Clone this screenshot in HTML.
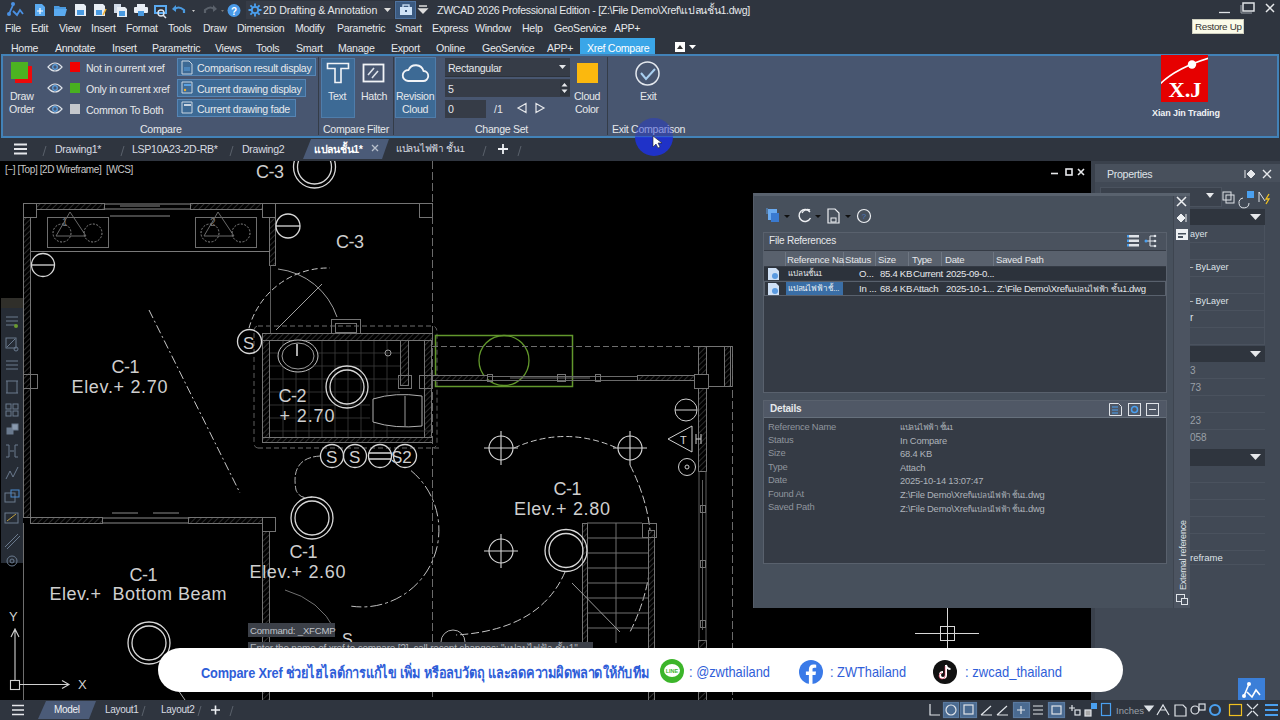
<!DOCTYPE html>
<html><head><meta charset="utf-8">
<style>
*{box-sizing:border-box;margin:0;padding:0}
html,body{width:1280px;height:720px;overflow:hidden}
body{position:relative;background:#2f353f;font-family:"Liberation Sans",sans-serif;color:#e6e8eb}
.a{position:absolute}
.t{position:absolute;line-height:1;white-space:nowrap}
.th{font-size:0.85em;letter-spacing:-0.3px}
svg{position:absolute;overflow:visible}
</style></head><body>

<!-- ===== TOP BAR ===== -->
<div class="a" style="left:0;top:0;width:1280px;height:137px;background:#2f353f"></div>

<!-- quick access icons -->
<svg style="left:0;top:0" width="240" height="20" viewBox="0 0 240 20">
  <path d="M9 14 L13 5 M13 11 L17 15 L20 10 L23 14" stroke="#4a90e2" stroke-width="1.8" fill="none"/>
  <circle cx="13" cy="4" r="2" fill="#4a90e2"/><circle cx="9" cy="14" r="2" fill="#4a90e2"/>
  <path d="M35 4 h7 l3 3 v9 h-10z" fill="#5aaaf0"/><path d="M40 8 v6 M37 11 h6" stroke="#fff" stroke-width="1.2"/>
  <path d="M54 6 h5 l1 1 h6 v2 h-12z" fill="#4a9ae0"/><path d="M54 9 h13 l-2 7 h-11z" fill="#5aaaf0"/>
  <path d="M75 4 h9 l2 2 v10 h-11z" fill="#e8eef5"/><rect x="77" y="10" width="7" height="5" fill="#4a9ae0"/>
  <path d="M94 4 h9 l2 2 v10 h-11z" fill="#e8eef5"/><rect x="96" y="10" width="6" height="5" fill="#4a9ae0"/><path d="M103 15 l3 -6" stroke="#f0b030" stroke-width="1.6"/>
  <rect x="114" y="4" width="7" height="9" fill="#d0dae8"/><path d="M117 7 h8 l2 2 v8 h-10z" fill="#e8eef5"/><rect x="119" y="11" width="6" height="5" fill="#4a9ae0"/>
  <rect x="137" y="4" width="8" height="4" fill="#e8eef5"/><rect x="134" y="7" width="14" height="6" rx="1" fill="#e8eef5"/><rect x="138" y="11" width="6" height="5" fill="#4a9ae0"/>
  <rect x="154" y="5" width="13" height="9" fill="#5aaaf0"/><rect x="156" y="7" width="9" height="5" fill="#2f353f"/><circle cx="161" cy="13" r="3" fill="none" stroke="#e0e6ee" stroke-width="1.3"/><path d="M163 15 l3 3" stroke="#e0e6ee" stroke-width="1.5"/>
  <path d="M174 10 q4 -5 10 0 v3" stroke="#4a9ae0" stroke-width="2.2" fill="none"/><path d="M172 9 l4 -4 v7z" fill="#4a9ae0"/>
  <path d="M192 10 l3 0 l-1.5 2z" fill="#ccc"/>
  <path d="M215 10 q-4 -5 -10 0 v3" stroke="#5a616b" stroke-width="2.2" fill="none"/><path d="M217 9 l-4 -4 v7z" fill="#5a616b"/>
  <path d="M221 10 l3 0 l-1.5 2z" fill="#777"/>
  <circle cx="234" cy="10.5" r="6.5" fill="#4a9ae8"/><text x="234" y="14.5" font-size="10" font-weight="bold" text-anchor="middle" fill="#fff" font-family="Liberation Sans">?</text>
</svg>

<!-- workspace dropdown -->
<div class="a" style="left:246px;top:1px;width:148px;height:18px;background:#363c47"></div>
<svg style="left:248px;top:3px" width="14" height="14" viewBox="0 0 14 14">
  <circle cx="7" cy="7" r="3.2" fill="none" stroke="#4aa0f0" stroke-width="1.8"/>
  <path d="M7 0.5v2.5M7 11v2.5M0.5 7h2.5M11 7h2.5M2.4 2.4l1.8 1.8M9.8 9.8l1.8 1.8M2.4 11.6l1.8-1.8M9.8 4.2l1.8-1.8" stroke="#4aa0f0" stroke-width="1.8"/>
</svg>
<div class="t" style="left:263px;top:5px;font-size:10.6px;letter-spacing:-0.1px;color:#e6e8eb">2D Drafting &amp; Annotation</div>
<svg style="left:384px;top:8px" width="8" height="5"><path d="M0 0h7l-3.5 4z" fill="#ddd"/></svg>
<div class="a" style="left:395px;top:1px;width:21px;height:18px;background:#3b5a80;border:1px solid #4f73a0"></div>
<svg style="left:399px;top:4px" width="14" height="12"><rect x="1" y="3" width="12" height="8" fill="#cfe3f7"/><rect x="4" y="1" width="6" height="3" fill="none" stroke="#cfe3f7" stroke-width="1.3"/><rect x="6" y="6" width="2" height="2" fill="#3b5a80"/></svg>
<svg style="left:418px;top:5px" width="10" height="10"><path d="M1 1h8M1 4h8l-4 4z" stroke="#ddd" stroke-width="1.3" fill="#ddd"/></svg>
<div class="t" style="left:437px;top:5px;font-size:10.6px;letter-spacing:-0.3px;color:#e6e8eb">ZWCAD 2026 Professional Edition - [Z:\File Demo\Xref\แปลนชั้น1.dwg]</div>

<!-- window controls -->
<svg style="left:1215px;top:0" width="65" height="18">
  <path d="M4 12.5h11" stroke="#dfe2e6" stroke-width="1.3"/>
  <rect x="28" y="3" width="11" height="8" fill="none" stroke="#dfe2e6" stroke-width="1.5"/><path d="M26 5v8h11" fill="none" stroke="#9aa0a8" stroke-width="1"/>
  <path d="M51 4l8 8M59 4l-8 8" stroke="#e6e8eb" stroke-width="1.5"/>
</svg>
<div class="a" style="left:1192px;top:19px;width:52px;height:15px;background:#fbfbe9;border:1px solid #cfcfbf"></div>
<div class="t" style="left:1195px;top:22px;font-size:9.8px;letter-spacing:-0.3px;color:#333">Restore Up</div>

<!-- menu -->
<div class="t" style="left:5px;top:23.4px;font-size:10.6px;letter-spacing:-0.3px">File</div>
<div class="t" style="left:31px;top:23.4px;font-size:10.6px;letter-spacing:-0.3px">Edit</div>
<div class="t" style="left:59px;top:23.4px;font-size:10.6px;letter-spacing:-0.3px">View</div>
<div class="t" style="left:91px;top:23.4px;font-size:10.6px;letter-spacing:-0.3px">Insert</div>
<div class="t" style="left:126px;top:23.4px;font-size:10.6px;letter-spacing:-0.3px">Format</div>
<div class="t" style="left:168px;top:23.4px;font-size:10.6px;letter-spacing:-0.3px">Tools</div>
<div class="t" style="left:203px;top:23.4px;font-size:10.6px;letter-spacing:-0.3px">Draw</div>
<div class="t" style="left:237px;top:23.4px;font-size:10.6px;letter-spacing:-0.3px">Dimension</div>
<div class="t" style="left:295px;top:23.4px;font-size:10.6px;letter-spacing:-0.3px">Modify</div>
<div class="t" style="left:337px;top:23.4px;font-size:10.6px;letter-spacing:-0.3px">Parametric</div>
<div class="t" style="left:395px;top:23.4px;font-size:10.6px;letter-spacing:-0.3px">Smart</div>
<div class="t" style="left:432px;top:23.4px;font-size:10.6px;letter-spacing:-0.3px">Express</div>
<div class="t" style="left:475px;top:23.4px;font-size:10.6px;letter-spacing:-0.3px">Window</div>
<div class="t" style="left:522px;top:23.4px;font-size:10.6px;letter-spacing:-0.3px">Help</div>
<div class="t" style="left:554px;top:23.4px;font-size:10.6px;letter-spacing:-0.3px">GeoService</div>
<div class="t" style="left:614px;top:23.4px;font-size:10.6px;letter-spacing:-0.3px">APP+</div>

<!-- ribbon tabs -->
<div class="a" style="left:580px;top:38px;width:75px;height:17px;background:#3aa6e8"></div>
<div class="t" style="left:11px;top:42.5px;font-size:10.6px;letter-spacing:-0.3px">Home</div>
<div class="t" style="left:55px;top:42.5px;font-size:10.6px;letter-spacing:-0.3px">Annotate</div>
<div class="t" style="left:112px;top:42.5px;font-size:10.6px;letter-spacing:-0.3px">Insert</div>
<div class="t" style="left:152px;top:42.5px;font-size:10.6px;letter-spacing:-0.3px">Parametric</div>
<div class="t" style="left:215px;top:42.5px;font-size:10.6px;letter-spacing:-0.3px">Views</div>
<div class="t" style="left:256px;top:42.5px;font-size:10.6px;letter-spacing:-0.3px">Tools</div>
<div class="t" style="left:296px;top:42.5px;font-size:10.6px;letter-spacing:-0.3px">Smart</div>
<div class="t" style="left:338px;top:42.5px;font-size:10.6px;letter-spacing:-0.3px">Manage</div>
<div class="t" style="left:391px;top:42.5px;font-size:10.6px;letter-spacing:-0.3px">Export</div>
<div class="t" style="left:436px;top:42.5px;font-size:10.6px;letter-spacing:-0.3px">Online</div>
<div class="t" style="left:482px;top:42.5px;font-size:10.6px;letter-spacing:-0.3px">GeoService</div>
<div class="t" style="left:547px;top:42.5px;font-size:10.6px;letter-spacing:-0.3px">APP+</div>
<div class="t" style="left:587px;top:42.5px;font-size:10.6px;letter-spacing:-0.3px;color:#fff">Xref Compare</div>
<svg style="left:674px;top:41px" width="24" height="12"><rect x="1" y="1" width="10" height="10" fill="#fff"/><path d="M3 8l3-4 3 4z" fill="#333"/><path d="M15 4h7l-3.5 4z" fill="#fff"/></svg>

<!-- RIBBON_PANEL -->
<div class="a" style="left:1px;top:54px;width:1278px;height:84px;background:#485670;border:2px solid #4282b8"></div>
<!-- separators -->
<div class="a" style="left:318px;top:57px;width:1px;height:78px;background:#343c48"></div>
<div class="a" style="left:393px;top:57px;width:1px;height:78px;background:#343c48"></div>
<div class="a" style="left:607px;top:57px;width:1px;height:78px;background:#343c48"></div>
<!-- draw order -->
<div class="a" style="left:15px;top:66px;width:17px;height:17px;background:#ee0a0a"></div>
<div class="a" style="left:11px;top:62px;width:17px;height:17px;background:#4cb321"></div>
<div class="t" style="left:10px;top:91px;font-size:10.6px;letter-spacing:-0.3px">Draw</div>
<div class="t" style="left:9px;top:104px;font-size:10.6px;letter-spacing:-0.3px">Order</div>
<!-- eye rows -->
<svg style="left:47px;top:60px" width="16" height="56" viewBox="0 0 16 56">
  <g fill="none" stroke="#dfe4ea" stroke-width="1.2">
    <path d="M1 7 Q8 -1 15 7 Q8 15 1 7z"/><path d="M1 28 Q8 20 15 28 Q8 36 1 28z"/><path d="M1 49 Q8 41 15 49 Q8 57 1 49z"/>
  </g>
  <g fill="none" stroke="#5aa0e0" stroke-width="1.3"><circle cx="8" cy="7" r="2.3"/><circle cx="8" cy="28" r="2.3"/><circle cx="8" cy="49" r="2.3"/></g>
</svg>
<div class="a" style="left:70px;top:62px;width:10px;height:10px;background:#f00000"></div>
<div class="a" style="left:70px;top:83px;width:10px;height:10px;background:#48b020"></div>
<div class="a" style="left:70px;top:104px;width:10px;height:10px;background:#c4c7cc"></div>
<div class="t" style="left:86px;top:63px;font-size:10.6px;letter-spacing:-0.3px">Not in current xref</div>
<div class="t" style="left:86px;top:84px;font-size:10.6px;letter-spacing:-0.3px">Only in current xref</div>
<div class="t" style="left:86px;top:105px;font-size:10.6px;letter-spacing:-0.3px">Common To Both</div>
<!-- compare buttons -->
<div class="a" style="left:177px;top:58px;width:139px;height:18px;background:#3d6a95;border:1px solid #5585b5"></div>
<div class="a" style="left:177px;top:79px;width:129px;height:18px;background:#3d6a95;border:1px solid #5585b5"></div>
<div class="a" style="left:177px;top:99px;width:119px;height:18px;background:#3d6a95;border:1px solid #5585b5"></div>
<svg style="left:180px;top:60px" width="14" height="56" viewBox="0 0 14 56">
  <g fill="none" stroke="#c8d4e0" stroke-width="1"><path d="M2 1h7l3 3v10h-10z"/><path d="M2 22h10v11h-10z"/><path d="M2 42h10v11h-10z"/></g>
  <path d="M4 8h6M4 10h6" stroke="#5aa0e0" stroke-width="1"/>
  <rect x="4" y="24" width="7" height="2" fill="#5aa0e0"/><circle cx="5" cy="30" r="1.2" fill="#f0b030"/>
  <rect x="4" y="44" width="7" height="2" fill="#c8d4e0"/>
</svg>
<div class="t" style="left:197px;top:63px;font-size:10.6px;letter-spacing:-0.3px">Comparison result display</div>
<div class="t" style="left:197px;top:84px;font-size:10.6px;letter-spacing:-0.3px">Current drawing display</div>
<div class="t" style="left:197px;top:104px;font-size:10.6px;letter-spacing:-0.3px">Current drawing fade</div>
<div class="t" style="left:140px;top:124px;font-size:10.6px;letter-spacing:-0.3px">Compare</div>
<!-- compare filter -->
<div class="a" style="left:321px;top:58px;width:34px;height:60px;background:#3d6a95;border:1px solid #4f7dab"></div>
<svg style="left:326px;top:62px" width="24" height="22" viewBox="0 0 24 22">
  <path d="M1.5 1.5h21v5h-7.5v14h-6v-14h-7.5z" fill="none" stroke="#f2f4f7" stroke-width="1.6"/>
</svg>
<svg style="left:362px;top:63px" width="24" height="21" viewBox="0 0 24 21">
  <rect x="1.5" y="1.5" width="20" height="17" fill="none" stroke="#f2f4f7" stroke-width="1.8"/>
  <path d="M6 12l6-7M10 15l6-7" stroke="#dde3ea" stroke-width="1.6"/>
</svg>
<div class="t" style="left:328px;top:91px;font-size:10.6px;letter-spacing:-0.3px">Text</div>
<div class="t" style="left:361px;top:91px;font-size:10.6px;letter-spacing:-0.3px">Hatch</div>
<div class="t" style="left:323px;top:124px;font-size:10.6px;letter-spacing:-0.3px">Compare Filter</div>
<!-- revision cloud -->
<div class="a" style="left:395px;top:57px;width:41px;height:61px;background:#3d6a95;border:1px solid #4f7dab"></div>
<svg style="left:402px;top:62px" width="27" height="22" viewBox="0 0 27 22">
  <path d="M6 19 h15 a5 5 0 0 0 0.5 -10 a8 8 0 0 0 -15 -1 a5.5 5.5 0 0 0 -0.5 11z" fill="none" stroke="#f2f4f7" stroke-width="1.8"/>
</svg>
<div class="t" style="left:396px;top:91px;font-size:10.6px;letter-spacing:-0.3px">Revision</div>
<div class="t" style="left:402px;top:104px;font-size:10.6px;letter-spacing:-0.3px">Cloud</div>
<!-- change set -->
<div class="a" style="left:445px;top:58px;width:125px;height:19px;background:#363c47;border-bottom:1px solid #2c323b"></div>
<div class="t" style="left:448px;top:63px;font-size:10.6px;letter-spacing:-0.3px">Rectangular</div>
<svg style="left:559px;top:65px" width="8" height="5"><path d="M0 0h7l-3.5 4z" fill="#e6e8eb"/></svg>
<div class="a" style="left:445px;top:79px;width:125px;height:18px;background:#363c47"></div>
<div class="a" style="left:560px;top:80px;width:10px;height:16px;background:#2e343d"></div>
<svg style="left:561px;top:82px" width="8" height="12"><path d="M0.5 4.5h6l-3-3.5z M0.5 7.5h6l-3 3.5z" fill="#e6e8eb"/></svg>
<div class="t" style="left:448px;top:84px;font-size:10.6px">5</div>
<div class="a" style="left:445px;top:100px;width:41px;height:18px;background:#363c47"></div>
<div class="t" style="left:448px;top:104px;font-size:10.6px">0</div>
<div class="t" style="left:494px;top:104px;font-size:10.6px">/1</div>
<svg style="left:516px;top:102px" width="30" height="12"><path d="M10 1.5v9l-8-4.5z M20 1.5v9l8-4.5z" fill="none" stroke="#e6e8eb" stroke-width="1.2"/></svg>
<div class="t" style="left:475px;top:124px;font-size:10.6px;letter-spacing:-0.3px">Change Set</div>
<div class="a" style="left:577px;top:63px;width:21px;height:20px;background:#fbb80e"></div>
<div class="t" style="left:574px;top:91px;font-size:10.6px;letter-spacing:-0.3px">Cloud</div>
<div class="t" style="left:575px;top:104px;font-size:10.6px;letter-spacing:-0.3px">Color</div>
<!-- exit -->
<svg style="left:634px;top:60px" width="28" height="28" viewBox="0 0 28 28">
  <circle cx="13.5" cy="13.5" r="11.5" fill="none" stroke="#e4e8ee" stroke-width="1.5"/>
  <path d="M7 13l5 6 9-10" fill="none" stroke="#a9cff0" stroke-width="2"/>
</svg>
<div class="t" style="left:640px;top:91px;font-size:10.6px;letter-spacing:-0.3px">Exit</div>
<div class="t" style="left:612px;top:124px;font-size:10.6px;letter-spacing:-0.3px">Exit Comparison</div>
<!-- XJ logo -->
<div class="a" style="left:1161px;top:55px;width:47px;height:47px;background:#e60000;overflow:hidden">
  <svg style="left:0;top:0" width="47" height="47" viewBox="0 0 47 47">
    <path d="M-1 29 Q15 13 48 3" fill="none" stroke="#fff" stroke-width="1.6"/>
    <circle cx="31" cy="9.5" r="4.2" fill="#fff"/>
    <text x="24" y="42" font-family="Liberation Serif" font-weight="bold" font-size="21" text-anchor="middle" fill="#fff" textLength="33" lengthAdjust="spacingAndGlyphs">X.J</text>
  </svg>
</div>
<div class="t" style="left:1152px;top:109px;font-size:9px;font-weight:bold;letter-spacing:-0.1px;color:#f0f2f5">Xian Jin Trading</div>

<!-- DOC_TABS -->
<svg style="left:0;top:137px" width="560" height="24" viewBox="0 0 560 24">
  <path d="M14 7.5h13M14 12h13M14 16.5h13" stroke="#e6e8eb" stroke-width="1.8"/>
  <g stroke="#5a616b" stroke-width="1"><path d="M43 19l3-10"/><path d="M121 19l3-10"/><path d="M230 19l3-10"/><path d="M483 19l3-10"/><path d="M518 19l3-10"/></g>
  <path d="M303 22 L311 2 L389 2 L382 22z" fill="#4b5b78"/>
  <path d="M372 8l6 6M378 8l-6 6" stroke="#b8c0cc" stroke-width="1.3"/>
  <path d="M498 12h10M503 7v10" stroke="#f0f2f5" stroke-width="1.8"/>
</svg>
<div class="t" style="left:55px;top:144px;font-size:10.6px;letter-spacing:-0.3px;color:#d8dce2">Drawing1*</div>
<div class="t" style="left:132px;top:144px;font-size:10.6px;letter-spacing:-0.3px;color:#d8dce2">LSP10A23-2D-RB*</div>
<div class="t" style="left:242px;top:144px;font-size:10.6px;letter-spacing:-0.3px;color:#d8dce2">Drawing2</div>
<div class="t" style="left:314px;top:144px;font-size:10.6px;font-weight:bold;letter-spacing:-0.3px;color:#fff">แปลนชั้น1*</div>
<div class="t" style="left:396px;top:144px;font-size:9.8px;letter-spacing:-0.3px;color:#d8dce2">แปลนไฟฟ้า ชั้น1</div>

<!-- DRAWING -->
<div class="a" style="left:0;top:161px;width:1091px;height:539px;background:#000;overflow:hidden">
<svg style="left:0;top:-161px" width="1091" height="700" viewBox="0 0 1091 700">
<defs>
  <pattern id="h" width="4" height="4" patternUnits="userSpaceOnUse" patternTransform="rotate(45)"><rect width="4" height="4" fill="#000"/><path d="M0 0v4" stroke="#4a4a4a" stroke-width="1.2"/></pattern>
</defs>
<g fill="none" stroke="#747474" stroke-width="1">
  <!-- upper-left room walls -->
  <rect x="23.5" y="203.5" width="13" height="14"/>
  <rect x="36.5" y="203.5" width="68" height="6" fill="url(#h)"/>
  <path d="M105 204h85M105 209h85M120 206h40M110 216h60" stroke="#8a8a8a"/>
  <rect x="190.5" y="203.5" width="72" height="6" fill="url(#h)"/>
  <rect x="262.5" y="203.5" width="13" height="14"/>
  <path d="M275 203.5h157"/>
  <rect x="419.5" y="203.5" width="13" height="14"/>
  <rect x="23.5" y="217.5" width="7" height="300" fill="url(#h)"/>
  <rect x="23.5" y="374.5" width="14" height="14"/>
  <rect x="269.5" y="217.5" width="6" height="48" fill="url(#h)"/>
  <path d="M31 251.5h239" stroke="#7a7a7a"/>
  <rect x="47.5" y="217.5" width="61" height="30" stroke="#6e6e6e"/>
  <rect x="195.5" y="217.5" width="61" height="30" stroke="#6e6e6e"/>
  <path d="M70 212 L56 236 L86 236z" stroke="#6a6a6a"/>
  <path d="M218 212 L204 236 L234 236z" stroke="#6a6a6a"/>
  <g stroke="#8a8a8a" stroke-dasharray="2 1.5">
    <circle cx="62" cy="233" r="9"/><circle cx="93" cy="233" r="9"/>
    <circle cx="210" cy="233" r="9"/><circle cx="241" cy="233" r="9"/>
  </g>
  <text x="62" y="226" font-size="10" fill="#777" stroke="none" font-family="Liberation Sans">1</text>
  <text x="210" y="226" font-size="10" fill="#777" stroke="none" font-family="Liberation Sans">2</text>
  <!-- lower wall of upper-left room -->
  <rect x="30.5" y="517.5" width="72" height="6" fill="url(#h)"/>
  <path d="M103 518h85M103 523h85M112 513h26M153 513h26" stroke="#8a8a8a"/>
  <rect x="188.5" y="517.5" width="74" height="6" fill="url(#h)"/>
  <rect x="262.5" y="517.5" width="13" height="14"/>
  <rect x="262.5" y="531.5" width="7" height="175" fill="url(#h)"/>
  <path d="M23.5 523v180" stroke="#6e6e6e"/>
  <!-- middle: top column dashed -->
  <path d="M432.5 161v540" stroke="#6a6a6a" stroke-dasharray="8 3"/>
  <!-- bathroom -->
  <path d="M258 326h174" stroke="#6e6e6e" stroke-dasharray="5 3"/>
  <rect x="331.5" y="319.5" width="29" height="16"/>
  <rect x="335.5" y="323.5" width="21" height="9"/>
  <rect x="262.5" y="333.5" width="170" height="7" fill="url(#h)"/>
  <rect x="262.5" y="340.5" width="7" height="100" fill="url(#h)"/>
  <rect x="400.5" y="340.5" width="8" height="45" fill="url(#h)"/><rect x="424.5" y="340.5" width="7" height="98" fill="url(#h)"/><rect x="398.5" y="375.5" width="13" height="13"/><rect x="419.5" y="375.5" width="13" height="13"/><path d="M258 448 q-4 0 -4 -6 v-110 q0 -6 4 -6 M432 448 q5 0 5 -6 v-110 q0 -6 -5 -6" stroke="#5e5e5e" stroke-dasharray="5 3"/>
  <rect x="262.5" y="437.5" width="170" height="5" fill="url(#h)"/>
  <path d="M258 448h182" stroke="#6e6e6e" stroke-dasharray="5 3"/>
  <g stroke="#3c3c3c" stroke-width="0.8">
    <path d="M270 353h130M270 366h130M270 379h130M270 392h130M270 405h100M270 418h100M270 431h162"/>
    <path d="M283 341v96M296 341v96M309 341v96M322 341v96M335 341v96M348 341v96M361 341v96M374 341v96M387 341v96"/>
  </g>
  <ellipse cx="298" cy="356" rx="20" ry="16" stroke="#c0c0c0" fill="#000"/>
  <ellipse cx="298" cy="356" rx="16" ry="13" stroke="#9a9a9a"/>
  <path d="M297 344v12" stroke="#aaa" stroke-width="2"/>
  <circle cx="388" cy="353" r="3" stroke="#9a9a9a"/>
  <path d="M373 399 Q395 392 422 396 v30 Q395 429 373 422z" stroke="#b0b0b0" fill="#000"/>
  <path d="M405 396v30" stroke="#9a9a9a"/>
  <!-- door swing near S -->
  <path d="M249 328 A82 82 0 0 1 330 268" stroke="#c8c8c8" stroke-dasharray="6 3"/>
  <path d="M278 269 A71 71 0 0 1 337 317" stroke="#a0a0a0"/>
  <path d="M276 330 L322 284" stroke="#a0a0a0"/>
  
  <path d="M270.5 265v68" stroke="#5a5a5a"/>
  <!-- long dash-dot -->
  <path d="M149 310 L240 493" stroke="#c8c8c8" stroke-dasharray="9 3 2 3"/>
  <!-- S row -->
  <path d="M320 456 Q290 458 296 490 Q300 500 312 497" stroke="#b0b0b0" stroke-dasharray="7 2"/>
  <path d="M411 470.6 A77 77 0 0 1 351.3 606.2" stroke="#c0c0c0" stroke-dasharray="12 3 3 3"/>
  <!-- green -->
  <rect x="435.5" y="335.5" width="137" height="51" stroke="#62982c" stroke-width="1.5"/>
  <circle cx="504" cy="360.5" r="25" stroke="#62982c" stroke-width="1.3"/>
  <!-- right room top walls -->
  <path d="M432 346.5h268" stroke="#6e6e6e" stroke-dasharray="6 3"/>
  <rect x="432.5" y="375.5" width="55" height="5" fill="url(#h)"/>
  <path d="M487 376.5h150M487 380.5h150M510 378h80" stroke="#6a6a6a"/>
  <rect x="487.5" y="374.5" width="5" height="7"/><rect x="557.5" y="374.5" width="8" height="7"/><rect x="595.5" y="374.5" width="5" height="7"/>
  <rect x="637.5" y="375.5" width="61" height="5" fill="url(#h)"/>
  <rect x="698.5" y="346.5" width="8" height="125" fill="url(#h)"/>
  <path d="M699 471v170M706 471v170M702.5 480v150" stroke="#5e5e5e"/>
  <rect x="700.5" y="505.5" width="5" height="7"/><rect x="700.5" y="560.5" width="5" height="7"/><rect x="700.5" y="620.5" width="5" height="7"/>
  <rect x="698.5" y="640.5" width="8" height="66" fill="url(#h)"/>
  <rect x="698.5" y="346.5" width="34" height="40"/>
  <rect x="724.5" y="346.5" width="6" height="40" fill="url(#h)"/>
  <path d="M732.5 346v360" stroke="#6a6a6a" stroke-dasharray="8 3"/>
  <rect x="694.5" y="374.5" width="14" height="14" fill="#000"/>
  <!-- symbols right -->
  <circle cx="686" cy="410" r="11" stroke="#d0d0d0"/>
  <path d="M675 410h22" stroke="#d0d0d0"/>
  <path d="M692 426 L668 439 L692 452z" stroke="#d0d0d0"/>
  <path d="M696 434v10M696 439h5M701 434v10" stroke="#d0d0d0"/>
  <text x="680" y="444" font-size="11" fill="#d8d8d8" stroke="none" font-family="Liberation Sans">T</text>
  <circle cx="687" cy="467" r="8.5" stroke="#d0d0d0"/>
  <circle cx="687" cy="467" r="2" stroke="#d0d0d0"/>
  <!-- crosshair circles -->
  <g stroke="#d8d8d8" stroke-width="1.1">
    <circle cx="501" cy="448" r="12"/><path d="M484 448h34M501 431v34"/>
    <circle cx="630" cy="448" r="12"/><path d="M613 448h34M630 431v34"/>
    <circle cx="501" cy="551" r="12"/><path d="M484 551h34M501 534v34"/>
  </g>
  <path d="M514 448 Q565 425 617 448" stroke="#c8c8c8" stroke-dasharray="6 3"/>
  <path d="M630 465 Q672 548 630 632" stroke="#c8c8c8" stroke-dasharray="8 3"/>
  <path d="M565 572 Q540 630 456 635" stroke="#c8c8c8" stroke-dasharray="8 3"/>
  
  <!-- stairs -->
  <rect x="582.5" y="523.5" width="5" height="120" fill="url(#h)"/>
  <rect x="648.5" y="530.5" width="6" height="170" fill="url(#h)"/>
  <rect x="642.5" y="523.5" width="14" height="14"/>
  <g stroke="#707070">
    <path d="M587 538h61M587 553h61M587 568h61M587 583h61M587 598h61M587 613h61M587 628h61M587 523h55M616 523v120"/>
  </g>
  <path d="M572 583 L620 632" stroke="#9a9a9a"/>
  <!-- lower right crosshair -->
  <rect x="940.5" y="626.5" width="14" height="14" stroke="#d8d8d8"/>
  <path d="M915 633.5h64M947.5 606v42" stroke="#d8d8d8"/>
  <!-- lower area bits -->
  <path d="M285 590 Q320 600 335 630" stroke="#707070"/>
  <path d="M160 664 L185 700" stroke="#aaa"/>
  <circle cx="453" cy="642" r="12" stroke="#b0b0b0"/>
</g>
<!-- double circles -->
<g fill="none" stroke="#d8d8d8" stroke-width="1.3">
  <circle cx="314.5" cy="167" r="21"/><circle cx="314.5" cy="167" r="17"/>
  <circle cx="347" cy="387" r="21"/><circle cx="347" cy="387" r="17"/>
  <circle cx="312" cy="518" r="21"/><circle cx="312" cy="518" r="17"/>
  <circle cx="566" cy="550.5" r="21"/><circle cx="566" cy="550.5" r="17"/>
  <circle cx="149" cy="643" r="21"/><circle cx="149" cy="643" r="17"/>
  <circle cx="43" cy="265" r="11.5"/><path d="M31.5 265h23"/>
  <circle cx="288" cy="226" r="12"/><path d="M276 226h24"/>
  <circle cx="249.5" cy="341.5" r="12"/>
  <circle cx="332" cy="456" r="11.5"/><circle cx="355" cy="456" r="11.5"/>
  <circle cx="380" cy="456" r="11.5"/><path d="M368.5 453h23M368.5 459h23"/>
  <circle cx="405" cy="456" r="11.5"/>
</g>
<g fill="#cfcfcf" font-family="Liberation Sans">
  <text x="243" y="348.5" font-size="17">S</text>
  <text x="326" y="463" font-size="17">S</text>
  <text x="349" y="463" font-size="17">S</text>
  <text x="391" y="463" font-size="17">S2</text>
  <text x="342" y="645" font-size="16">S</text>
  <text x="256" y="178" font-size="18" textLength="28">C-3</text>
  <text x="336" y="247.5" font-size="18" textLength="28">C-3</text>
  <text x="111.5" y="372.5" font-size="18" textLength="28">C-1</text>
  <text x="71.5" y="392.5" font-size="18" textLength="96">Elev.+ 2.70</text>
  <text x="278.5" y="401.5" font-size="18" textLength="28">C-2</text>
  <text x="279.5" y="421.5" font-size="18" textLength="55">+ 2.70</text>
  <text x="553.5" y="494.5" font-size="18" textLength="28">C-1</text>
  <text x="514" y="514.5" font-size="18" textLength="96">Elev.+ 2.80</text>
  <text x="289.5" y="557.5" font-size="18" textLength="28">C-1</text>
  <text x="249.5" y="577.5" font-size="18" textLength="96">Elev.+ 2.60</text>
  <text x="129.5" y="580.5" font-size="18" textLength="28">C-1</text>
  <text x="49.5" y="599.5" font-size="18" textLength="177" xml:space="preserve">Elev.+  Bottom Beam</text>
</g>
<!-- UCS -->
<g fill="none" stroke="#d0d0d0" stroke-width="1.1">
  <rect x="10.5" y="680.5" width="9" height="9"/>
  <path d="M15 680v-50M11 637l4-8 4 8M20 684.5h49M62 680.5l7 4-7 4"/>
</g>
<text x="9" y="621" font-size="13" fill="#d0d0d0" font-family="Liberation Sans">Y</text>
<text x="78" y="689" font-size="13" fill="#d0d0d0" font-family="Liberation Sans">X</text>
<!-- viewport controls -->
<g stroke="#e6e8eb" stroke-width="1.6" fill="none">
  <path d="M1051 173.5h7"/>
  <rect x="1066" y="169" width="6" height="6"/>
  <path d="M1078 169l6 6M1084 169l-6 6"/>
</g>
</svg>
<div class="t" style="left:5px;top:4px;font-size:10px;letter-spacing:-0.4px;color:#c8c8c8">[−] [Top] [2D Wireframe]&nbsp; [WCS]</div>
<!-- command line -->
<div class="a" style="left:248px;top:462px;width:87px;height:14px;background:#3c4048"></div>
<div class="t" style="left:250px;top:465px;font-size:9.6px;letter-spacing:-0.2px;color:#c0c4ca">Command: _XFCMP</div>
<div class="a" style="left:248px;top:481px;width:345px;height:14px;background:#3c4048"></div>
<div class="t" style="left:250px;top:483px;font-size:10px;letter-spacing:-0.2px;color:#b0b4ba">Enter the name of xref to compare [?], call recent changes: "แปลนไฟฟ้า ชั้น1"</div>
<!-- left toolbar -->
<div class="a" style="left:1px;top:137px;width:22px;height:265px;background:#262c35"></div>
<div class="a" style="left:1px;top:137px;width:22px;height:10px;background:#302f2a"></div>
<svg style="left:2px;top:150px" width="20" height="252" viewBox="0 0 20 252">
  <g fill="none" stroke="#6a7a8e" stroke-width="1">
    <path d="M4 6h12M4 10h12M4 14h10"/><circle cx="14" cy="15" r="2" fill="#6a9a30" stroke="none"/>
    <rect x="4" y="27" width="10" height="10"/><path d="M5 36l8-8"/><circle cx="14" cy="38" r="2"/>
    <path d="M4 50h12M4 54h12M4 58h12"/>
    <path d="M5 70v12M15 70v12M4 70h12M4 82h12"/>
    <rect x="4" y="93" width="5" height="5"/><rect x="11" y="93" width="5" height="5"/><rect x="4" y="100" width="5" height="5"/><rect x="11" y="100" width="5" height="5"/>
    <rect x="5" y="117" width="6" height="6" fill="#6a7a8e"/><rect x="10" y="113" width="6" height="6" fill="#8a9aae"/>
    <path d="M4 134h3v12h-3M16 134h-3v12h3M8 140h4"/>
    <path d="M4 168l4-8 3 6 5-10"/>
    <rect x="3" y="182" width="10" height="9"/><rect x="9" y="179" width="8" height="7" stroke="#4a8ad0"/>
    <rect x="3" y="202" width="13" height="10"/><path d="M5 210l9-7" stroke="#c0a040"/>
    <path d="M3 236l13-13M5 238l13-13"/>
    <circle cx="10" cy="250" r="5"/><circle cx="10" cy="250" r="2"/>
  </g>
</svg>
</div>

<!-- PROPS -->
<div class="a" style="left:1091px;top:161px;width:189px;height:539px;background:#3a414c"></div>
<div class="a" style="left:1095px;top:164px;width:185px;height:536px;background:#414955"></div>
<div class="a" style="left:1095px;top:164px;width:185px;height:18px;background:#48505c"></div>
<div class="t" style="left:1107px;top:169px;font-size:10.6px;letter-spacing:-0.3px;color:#dfe3e8">Properties</div>
<svg style="left:1240px;top:166px" width="38" height="16">
  <path d="M5 4v8M7 8l4-4v8z M15 8l-4-4v8z" fill="#e6e8eb" stroke="#e6e8eb" stroke-width="1"/>
  <path d="M23 4l8 8M31 4l-8 8" stroke="#e6e8eb" stroke-width="1.4"/>
</svg>
<div class="a" style="left:1100px;top:187px;width:122px;height:20px;background:#3a414c;border:1px solid #4a525e"></div>
<svg style="left:1205px;top:190px" width="75" height="16">
  <path d="M1 3h8l-4 5z" fill="#e6e8eb"/>
  <rect x="18" y="2" width="8" height="8" fill="none" stroke="#dfe3e8"/><rect x="21" y="5" width="8" height="8" fill="none" stroke="#dfe3e8"/>
  <rect x="42" y="1" width="7" height="7" fill="#4aa0f0"/><path d="M38 8a5 5 0 1 0 6 5" fill="none" stroke="#dfe3e8"/>
  <path d="M54 2l6 9M54 2v10" stroke="#dfe3e8" fill="none"/><path d="M64 4l-3 5h3l-3 5" stroke="#f0c020" fill="none" stroke-width="1.3"/>
</svg>
<div class="a" style="left:1100px;top:209px;width:165px;height:16px;background:#2f353e"></div>
<svg style="left:1250px;top:214px" width="12" height="7"><path d="M0 0h11l-5.5 6z" fill="#e6e8eb"/></svg>
<div class="a" style="left:1100px;top:225px;width:165px;height:120px;border:1px solid #4a525e;border-top:none"></div>
<svg style="left:1100px;top:225px" width="165" height="340">
  <g stroke="#4a525e" stroke-width="1">
    <path d="M0 17.5h165M0 34.5h165M0 51.5h165M0 68.5h165M0 85.5h165M0 102.5h165"/>
    <path d="M0 153.5h165M0 170.5h165M0 187.5h165M0 204.5h165"/>
    <path d="M0 257.5h165M0 274.5h165M0 291.5h165M0 308.5h165M0 325.5h165M0 339.5h165"/>
  </g>
</svg>
<div class="a" style="left:1100px;top:346px;width:165px;height:16px;background:#2f353e"></div>
<svg style="left:1250px;top:351px" width="12" height="7"><path d="M0 0h11l-5.5 6z" fill="#e6e8eb"/></svg>
<div class="a" style="left:1100px;top:449px;width:165px;height:17px;background:#2f353e"></div>
<svg style="left:1250px;top:454px" width="12" height="7"><path d="M0 0h11l-5.5 6z" fill="#e6e8eb"/></svg>
<div class="t" style="left:1190px;top:230px;font-size:9px;color:#dfe3e8">ayer</div>
<div class="t" style="left:1188px;top:263px;font-size:9px;color:#dfe3e8">– ByLayer</div>
<div class="t" style="left:1188px;top:297px;font-size:9px;color:#dfe3e8">– ByLayer</div>
<div class="t" style="left:1190px;top:313px;font-size:10px;color:#dfe3e8">r</div>
<div class="t" style="left:1190px;top:366px;font-size:10px;color:#9aa0a8">3</div>
<div class="t" style="left:1190px;top:383px;font-size:10px;color:#9aa0a8">73</div>
<div class="t" style="left:1190px;top:416px;font-size:10px;color:#9aa0a8">23</div>
<div class="t" style="left:1190px;top:433px;font-size:10px;color:#9aa0a8">058</div>
<div class="t" style="left:1190px;top:553px;font-size:9.5px;color:#dfe3e8">reframe</div>
<!-- zwcad logo -->
<div class="a" style="left:1238px;top:678px;width:27px;height:22px;background:#3b7fd8"></div>
<svg style="left:1238px;top:678px" width="27" height="22"><path d="M6 18l5-12M9 14l5 5 4-7 4 5" stroke="#fff" stroke-width="1.6" fill="none"/><circle cx="11" cy="6" r="2" fill="#fff"/><circle cx="6" cy="18" r="2" fill="#fff"/></svg>

<!-- DIALOG -->
<div class="a" style="left:753px;top:193px;width:437px;height:415px;background:#47505c;border-top:3px solid #59626e;border-left:1px solid #555d69"></div>
<div class="a" style="left:1173px;top:196px;width:17px;height:412px;background:#4c5461;border-left:1px solid #3e4550"></div>
<svg style="left:1174px;top:194px" width="16" height="50">
  <path d="M3 3l9 9M12 3l-9 9" stroke="#eef0f3" stroke-width="1.5"/>
  <path d="M3 24l4-4v8z M11 24l-4-4v8z M12 20v8" fill="#eef0f3" stroke="#eef0f3"/>
  <rect x="2" y="35" width="12" height="11" fill="#eef0f3"/><rect x="4" y="39" width="8" height="1.5" fill="#47505c"/><rect x="4" y="42" width="5" height="2" fill="#47505c"/>
</svg>
<svg style="left:1175px;top:517px" width="14" height="90">
  <text x="0" y="0" transform="translate(11,73) rotate(-90)" font-family="Liberation Sans" font-size="9" textLength="70" fill="#dfe3e8">External reference</text>
  <rect x="1.5" y="77.5" width="8" height="7" fill="none" stroke="#dfe3e8"/><rect x="6.5" y="81.5" width="6" height="6" fill="#4c5461" stroke="#dfe3e8"/>
</svg>
<!-- toolbar -->
<svg style="left:763px;top:205px" width="110" height="22">
  <rect x="5" y="4" width="9" height="11" fill="#6aaaf0"/><rect x="8" y="8" width="8" height="9" fill="#3a7ad0"/><path d="M4 3v6" stroke="#5a9ae0"/>
  <path d="M21 10h6l-3 3z" fill="#111"/>
  <path d="M47 7a6 6 0 1 0 0.5 6" fill="none" stroke="#eef0f3" stroke-width="1.4"/><path d="M39 8a6 6 0 0 1 8 -3" fill="none" stroke="#eef0f3" stroke-width="1.4"/>
  <path d="M52 10h6l-3 3z" fill="#111"/>
  <path d="M65 4h7l4 4v10h-11z" fill="none" stroke="#eef0f3" stroke-width="1.2"/><rect x="68" y="13" width="5" height="4" fill="none" stroke="#eef0f3"/>
  <path d="M82 10h6l-3 3z" fill="#111"/>
  <circle cx="101" cy="11" r="6.5" fill="none" stroke="#eef0f3" stroke-width="1.2"/><text x="101" y="14" font-size="8" text-anchor="middle" fill="#4a7ac0" font-family="Liberation Sans">?</text>
</svg>
<!-- file references box -->
<div class="a" style="left:763px;top:232px;width:404px;height:161px;background:#353b45;border:1px solid #59616d"></div>
<div class="a" style="left:764px;top:233px;width:402px;height:17px;background:#4a525e"></div>
<div class="t" style="left:769px;top:236px;font-size:10px;letter-spacing:-0.2px;color:#e6e8eb">File References</div>
<svg style="left:1126px;top:234px" width="34" height="14">
  <g fill="#dfe3e8"><rect x="3" y="1" width="10" height="2.5"/><rect x="3" y="5.5" width="10" height="2.5"/><rect x="3" y="10" width="10" height="2.5"/></g>
  <g fill="#4aa0f0"><rect x="1" y="1" width="2" height="2.5"/><rect x="1" y="5.5" width="2" height="2.5"/><rect x="1" y="10" width="2" height="2.5"/></g>
  <path d="M20 7h4M24 2v10M24 2h4M24 7h4M24 12h4" stroke="#dfe3e8" fill="none"/><circle cx="20" cy="7" r="1.5" fill="#4aa0f0"/>
  <circle cx="29" cy="2" r="1.3" fill="#dfe3e8"/><circle cx="29" cy="7" r="1.3" fill="#dfe3e8"/><circle cx="29" cy="12" r="1.3" fill="#dfe3e8"/>
</svg>
<div class="a" style="left:764px;top:251px;width:402px;height:15px;background:#59616d"></div>
<svg style="left:764px;top:251px" width="402" height="15"><g stroke="#6e7682"><path d="M21.5 1v14M79.5 1v14M111.5 1v14M144.5 1v14M177.5 1v14M229.5 1v14"/></g></svg>
<div class="t" style="left:787px;top:255px;font-size:9.6px;letter-spacing:-0.2px;color:#e6e8eb">Reference Na</div>
<div class="t" style="left:845px;top:255px;font-size:9.6px;letter-spacing:-0.2px;color:#e6e8eb">Status</div>
<div class="t" style="left:878px;top:255px;font-size:9.6px;letter-spacing:-0.2px;color:#e6e8eb">Size</div>
<div class="t" style="left:912px;top:255px;font-size:9.6px;letter-spacing:-0.2px;color:#e6e8eb">Type</div>
<div class="t" style="left:945px;top:255px;font-size:9.6px;letter-spacing:-0.2px;color:#e6e8eb">Date</div>
<div class="t" style="left:996px;top:255px;font-size:9.6px;letter-spacing:-0.2px;color:#e6e8eb">Saved Path</div>
<div class="a" style="left:764px;top:267px;width:402px;height:13px;background:#2c323b"></div>
<div class="a" style="left:764px;top:281px;width:402px;height:15px;background:#2f353e;border:1px solid #59616d"></div>
<div class="a" style="left:786px;top:282px;width:57px;height:13px;background:#3a6ea6"></div>
<svg style="left:767px;top:267px" width="14" height="30">
  <path d="M1 1h8l3 3v9h-11z" fill="#cfe0f5"/><circle cx="8" cy="9" r="3" fill="#5a9ae0"/>
  <path d="M1 16h8l3 3v9h-11z" fill="#cfe0f5"/><circle cx="8" cy="24" r="3" fill="#5a9ae0"/>
</svg>
<div class="t" style="left:788px;top:270px;font-size:8px;color:#e6e8eb">แปลนชั้น1</div>
<div class="t" style="left:859px;top:269px;font-size:9.6px;letter-spacing:-0.2px;color:#e6e8eb">O...</div>
<div class="t" style="left:880px;top:269px;font-size:9.6px;letter-spacing:-0.3px;color:#e6e8eb">85.4 KB</div>
<div class="t" style="left:913px;top:269px;font-size:9.6px;letter-spacing:-0.3px;color:#e6e8eb">Current</div>
<div class="t" style="left:946px;top:269px;font-size:9.6px;letter-spacing:-0.3px;color:#e6e8eb">2025-09-0...</div>
<div class="t" style="left:788px;top:285px;font-size:8px;letter-spacing:-0.2px;color:#f0f2f5">แปลนไฟฟ้า ชั้...</div>
<div class="t" style="left:859px;top:284px;font-size:9.6px;letter-spacing:-0.2px;color:#e6e8eb">In ...</div>
<div class="t" style="left:880px;top:284px;font-size:9.6px;letter-spacing:-0.3px;color:#e6e8eb">68.4 KB</div>
<div class="t" style="left:913px;top:284px;font-size:9.6px;letter-spacing:-0.3px;color:#e6e8eb">Attach</div>
<div class="t" style="left:946px;top:284px;font-size:9.6px;letter-spacing:-0.3px;color:#e6e8eb">2025-10-1...</div>
<div class="t" style="left:997px;top:284px;font-size:9.6px;letter-spacing:-0.3px;color:#e6e8eb">Z:\File Demo\Xref\<span class="th">แปลนไฟฟ้า ชั้น1</span>.dwg</div>
<!-- details box -->
<div class="a" style="left:763px;top:400px;width:404px;height:164px;background:#353b45;border:1px solid #59616d"></div>
<div class="a" style="left:764px;top:401px;width:402px;height:17px;background:#505866;border-bottom:1px solid #66707c"></div>
<div class="t" style="left:770px;top:404px;font-size:10px;font-weight:bold;letter-spacing:-0.2px;color:#e6e8eb">Details</div>
<svg style="left:1108px;top:402px" width="52" height="15">
  <g fill="none" stroke="#dfe3e8" stroke-width="1"><path d="M1.5 1.5h9l3 3v9h-12z"/><rect x="20.5" y="1.5" width="12" height="12"/><rect x="38.5" y="1.5" width="12" height="12"/><path d="M41 7.5h7"/></g>
  <path d="M4 5h6M4 8h6M4 11h6" stroke="#4aa0f0"/><circle cx="26.5" cy="7.5" r="3" fill="none" stroke="#4aa0f0" stroke-width="1.5"/>
</svg>
<div class="t" style="left:768px;top:419.5px;font-size:9.4px;letter-spacing:-0.2px;color:#8f959d;line-height:13.45px">Reference Name<br>Status<br>Size<br>Type<br>Date<br>Found At<br>Saved Path</div>
<div class="t" style="left:900px;top:419.5px;font-size:9.4px;letter-spacing:-0.2px;color:#aeb3ba;line-height:13.45px"><span class="th">แปลนไฟฟ้า ชั้น1</span><br>In Compare<br>68.4 KB<br>Attach<br>2025-10-14 13:07:47<br>Z:\File Demo\Xref\<span class="th">แปลนไฟฟ้า ชั้น1</span>.dwg<br>Z:\File Demo\Xref\<span class="th">แปลนไฟฟ้า ชั้น1</span>.dwg</div>

<!-- BOTTOM -->
<div class="a" style="left:0;top:700px;width:1280px;height:20px;background:#2f353f"></div>
<svg style="left:0;top:700px" width="240" height="20">
  <path d="M12 5.5h12M12 10h12M12 14.5h12" stroke="#e6e8eb" stroke-width="1.6"/>
  <path d="M38 19 L46 1 L96 1 L89 19z" fill="#4b5b78"/>
  <g stroke="#5a616b"><path d="M142 16l3-10M198 16l3-10M230 16l3-10"/></g>
  <path d="M211 10h9M215.5 5.5v9" stroke="#eef0f3" stroke-width="1.6"/>
</svg>
<div class="t" style="left:54px;top:705px;font-size:10px;letter-spacing:-0.3px;color:#eef0f3">Model</div>
<div class="t" style="left:105px;top:705px;font-size:10px;letter-spacing:-0.3px;color:#d8dce2">Layout1</div>
<div class="t" style="left:161px;top:705px;font-size:10px;letter-spacing:-0.3px;color:#d8dce2">Layout2</div>
<!-- status icons -->
<svg style="left:925px;top:700px" width="355" height="20">
  <g fill="none" stroke="#dfe3e8" stroke-width="1.2">
    <path d="M5 4v11h10"/>
    <rect x="18.5" y="2.5" width="15" height="15" fill="#4a6a90" stroke="#5a7aa0"/><circle cx="26" cy="10" r="5"/>
    <rect x="35.5" y="2.5" width="16" height="15" fill="#4a6a90" stroke="#5a7aa0"/><rect x="39" y="5" width="9" height="9"/>
    <path d="M56 15l10-9M56 15h11"/>
    <path d="M72 15l10-9M72 15h11"/>
    <rect x="88.5" y="2.5" width="16" height="15" fill="#4a6a90" stroke="#5a7aa0"/><path d="M92 10h8M96 6v8"/>
    <path d="M108 6h10M108 10h10M108 14h10"/>
    <rect x="123.5" y="2.5" width="16" height="15" fill="#4a6a90" stroke="#5a7aa0"/><rect x="127" y="6" width="9" height="8"/>
    <path d="M144 8h6M147 5v6"/><rect x="150" y="10" width="5" height="5"/>
    <rect x="160" y="10" width="6" height="6" fill="#aaa"/><rect x="166" y="3" width="6" height="6" fill="#4aa0f0" stroke="none"/>
    <rect x="176.5" y="3.5" width="9" height="12" stroke="#4aa0f0"/>
    <path d="M220 6h8l-4 5z" fill="#dfe3e8"/>
    <path d="M232 15l6-10 6 10M235 10h6"/>
    <path d="M250 5h8l3 3v8h-11z"/>
    <circle cx="270" cy="10" r="4"/><rect x="274" y="4" width="6" height="6"/>
    <circle cx="290" cy="10" r="5" stroke="#4aa0f0" stroke-width="2.2"/>
    <rect x="304.5" y="4.5" width="12" height="11" stroke="#f0c020"/>
    <path d="M322 4l5 5M333 4l-5 5M322 16l5-5M333 16l-5-5"/>
    <path d="M340 5h13M340 10h13M340 15h13" stroke="#4aa0f0" stroke-width="1.8"/>
  </g>
  <text x="191" y="14" font-size="9.5" fill="#9aa0a8" font-family="Liberation Sans">Inches</text>
</svg>
<!-- banner -->
<div class="a" style="left:158px;top:648px;width:965px;height:44px;background:#fff;border-radius:22px"></div>
<div class="t" id="bn" style="left:201px;top:664.5px;font-size:15px;font-weight:bold;letter-spacing:-0.2px;color:#2f5ed8;transform-origin:0 0;transform:scaleX(0.85)">Compare Xref ช่วยไฮไลต์การแก้ไข เพิ่ม หรือลบวัตถุ และลดความผิดพลาดให้กับทีม</div>
<svg style="left:659px;top:658px" width="26" height="26"><circle cx="13" cy="13" r="12" fill="#3cb52a"/><ellipse cx="13" cy="12.5" rx="8" ry="6.5" fill="#fff"/><text x="13" y="15" font-size="5.5" font-weight="bold" text-anchor="middle" fill="#3cb52a" font-family="Liberation Sans">LINE</text></svg>
<div class="t" id="b1" style="left:689px;top:664px;font-size:15px;color:#2f5ed8;transform-origin:0 0;transform:scaleX(0.857)">: @zwthailand</div>
<svg style="left:798px;top:659px" width="26" height="26"><circle cx="13" cy="13" r="12" fill="#3a7ae8"/><path d="M14.5 25v-9h3l0.5-3.5h-3.5v-2c0-1 0.3-1.7 1.8-1.7h1.9v-3.1c-0.3 0-1.5-0.2-2.8-0.2-2.7 0-4.5 1.7-4.5 4.7v2.3h-3v3.5h3v9z" fill="#fff"/></svg>
<div class="t" id="b2" style="left:830px;top:664px;font-size:15px;color:#2f5ed8;transform-origin:0 0;transform:scaleX(0.852)">: ZWThailand</div>
<svg style="left:932px;top:659px" width="26" height="26"><circle cx="13" cy="13" r="12" fill="#111"/><path d="M14 6v10a3 3 0 1 1 -3 -3" fill="none" stroke="#fff" stroke-width="2"/><path d="M14 6q1 4 4.5 4" fill="none" stroke="#fff" stroke-width="2"/><path d="M13 7v10a3 3 0 1 1 -3 -3" fill="none" stroke="#e8345a" stroke-width="0.8" opacity="0.7"/></svg>
<div class="t" id="b3" style="left:965px;top:664px;font-size:15px;color:#2f5ed8;transform-origin:0 0;transform:scaleX(0.868)">: zwcad_thailand</div>
<!-- cursor highlight -->
<div class="a" style="left:635px;top:118px;width:38px;height:19px;overflow:hidden"><div class="a" style="left:0;top:0;width:38px;height:38px;border-radius:50%;background:rgba(35,55,210,0.45)"></div></div>
<div class="a" style="left:635px;top:137px;width:38px;height:19px;overflow:hidden"><div class="a" style="left:0;top:-19px;width:38px;height:38px;border-radius:50%;background:rgba(30,50,215,0.9)"></div></div>
<svg style="left:652px;top:135px" width="12" height="14"><path d="M1 1v11l3-3 2 4 2-1-2-4h4z" fill="#fff" stroke="#222" stroke-width="0.6"/></svg>

</body></html>
